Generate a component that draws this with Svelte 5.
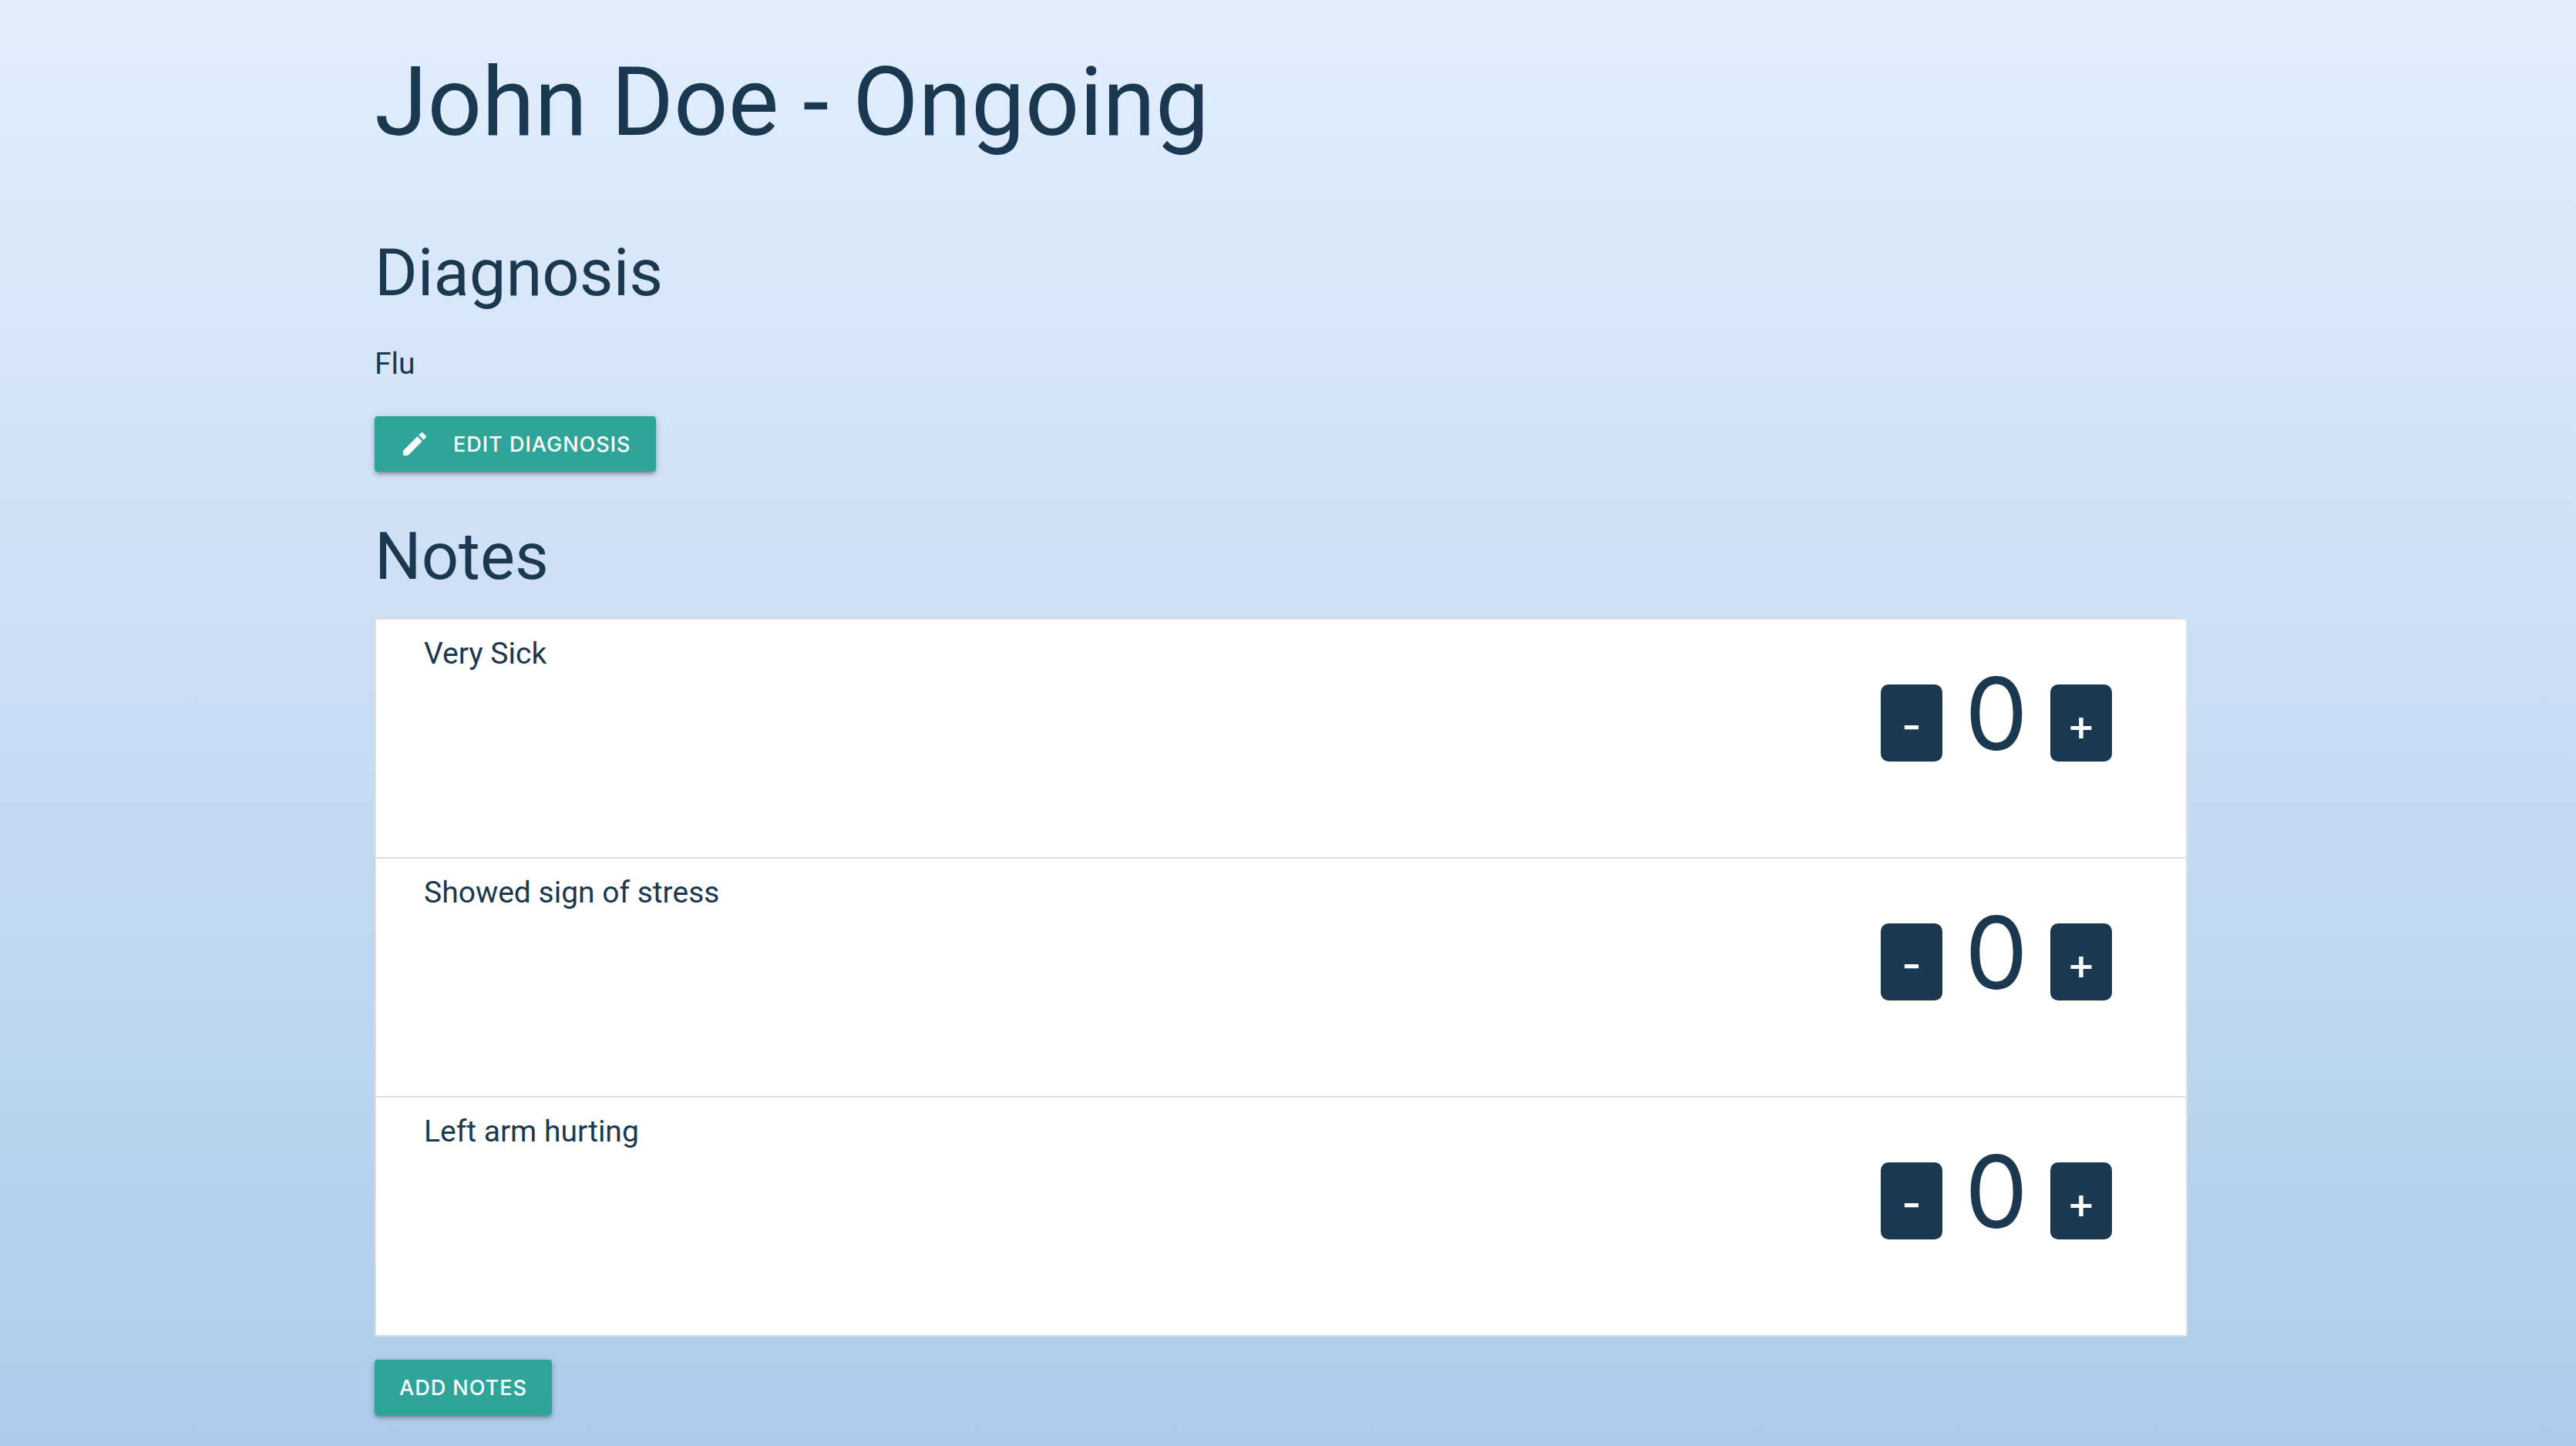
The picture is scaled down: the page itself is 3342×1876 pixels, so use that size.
<script lang="ts">
    let notes = $state([
        { text: 'Very Sick', votes: 0 },
        { text: 'Showed sign of stress', votes: 0 },
        { text: 'Left arm hurting', votes: 0 }
    ]);
</script>

<main class="patient">
    <h1>John Doe - Ongoing</h1>

    <h2>Diagnosis</h2>
    <p class="diagnosis">Flu</p>
    <button class="btn">
        <svg class="btn__icon" viewBox="0 0 24 24" aria-hidden="true">
            <path
                d="M3 17.25V21h3.75L17.81 9.94l-3.75-3.75L3 17.25zM20.71 7.04a1 1 0 0 0 0-1.41l-2.34-2.34a1 1 0 0 0-1.41 0l-1.83 1.83 3.75 3.75 1.83-1.83z"
            />
        </svg>
        Edit Diagnosis
    </button>

    <h2>Notes</h2>
    <ul class="notes">
        {#each notes as note}
            <li class="note">
                <span>{note.text}</span>
                <div class="counter">
                    <button class="counter__button" onclick={() => note.votes--}>-</button>
                    <span class="counter__value">{note.votes}</span>
                    <button class="counter__button" onclick={() => note.votes++}>+</button>
                </div>
            </li>
        {/each}
    </ul>
    <button class="btn">Add Notes</button>
</main>

<style>
    :global(body) {
        margin: 0;
    }
    .patient {
        box-sizing: border-box;
        min-height: 100vh;
        padding: 58px 504px 40px 486px;
        background: linear-gradient(#e2eefc, #cddff5 43%, #adcceb);
        color: #1a3850;
        font-family: Roboto, sans-serif;
        font-size: 39px;
        line-height: 60px;
    }
    h1,
    h2 {
        margin: 0;
        font-weight: 400;
    }
    h1 {
        margin-bottom: 98px;
        font-size: 124px;
        line-height: 150px;
    }
    h2 {
        margin-bottom: 32px;
        font-size: 85px;
        line-height: 96px;
    }
    .diagnosis {
        margin: 40px 0 38px;
    }
    .btn {
        display: flex;
        align-items: center;
        height: 72px;
        padding: 0 32px;
        border: none;
        border-radius: 4px;
        background: #2fa599;
        color: #fff;
        font-family: Inter, sans-serif;
        font-size: 27px;
        font-weight: 500;
        letter-spacing: 1px;
        text-transform: uppercase;
        box-shadow:
            0 4px 4px 0 rgba(0, 0, 0, 0.14),
            0 6px 2px -4px rgba(0, 0, 0, 0.12),
            0 2px 10px 0 rgba(0, 0, 0, 0.2);
    }
    .btn__icon {
        width: 40px;
        height: 40px;
        margin-right: 30px;
        fill: currentColor;
    }
    .btn + h2 {
        margin-top: 62px;
    }
    .notes {
        margin: 0 0 30px;
        padding: 0;
        border: 2px solid #e0e0e0;
        background: #fff;
        list-style: none;
    }
    .note {
        display: flex;
        justify-content: space-between;
        box-sizing: border-box;
        height: 310px;
        padding: 14px 96px 0 62px;
        border-bottom: 2px solid #e0e0e0;
    }
    .note:last-child {
        height: 308px;
        border-bottom: none;
    }
    .counter {
        display: flex;
        align-items: flex-start;
        padding-top: 70px;
        font-family: Inter, sans-serif;
    }
    .counter__button {
        width: 80px;
        height: 100px;
        padding: 6px 0 0;
        border: none;
        border-radius: 10px;
        background: #1a3850;
        color: #fff;
        font-family: inherit;
        font-size: 56px;
        font-weight: 500;
    }
    .counter__value {
        width: 140px;
        font-size: 130px;
        line-height: 76px;
        text-align: center;
    }
</style>
